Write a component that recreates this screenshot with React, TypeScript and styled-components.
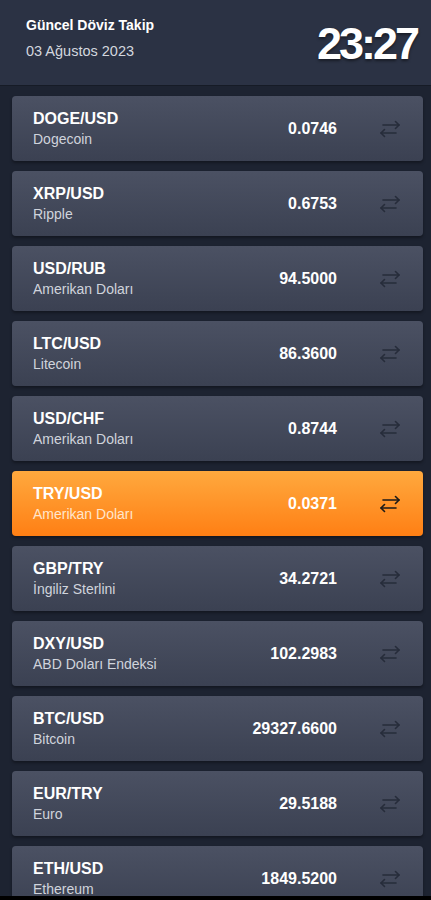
import styled, { createGlobalStyle } from 'styled-components';

interface Rate {
  pair: string;
  name: string;
  price: string;
  active?: boolean;
}

const rates: Rate[] = [
  { pair: 'DOGE/USD', name: 'Dogecoin', price: '0.0746' },
  { pair: 'XRP/USD', name: 'Ripple', price: '0.6753' },
  { pair: 'USD/RUB', name: 'Amerikan Doları', price: '94.5000' },
  { pair: 'LTC/USD', name: 'Litecoin', price: '86.3600' },
  { pair: 'USD/CHF', name: 'Amerikan Doları', price: '0.8744' },
  { pair: 'TRY/USD', name: 'Amerikan Doları', price: '0.0371', active: true },
  { pair: 'GBP/TRY', name: 'İngiliz Sterlini', price: '34.2721' },
  { pair: 'DXY/USD', name: 'ABD Doları Endeksi', price: '102.2983' },
  { pair: 'BTC/USD', name: 'Bitcoin', price: '29327.6600' },
  { pair: 'EUR/TRY', name: 'Euro', price: '29.5188' },
  { pair: 'ETH/USD', name: 'Ethereum', price: '1849.5200' },
];

const GlobalStyle = createGlobalStyle`
  html, body {
    margin: 0;
    padding: 0;
    background: #1d2331;
    font-family: "Liberation Sans", Arial, sans-serif;
  }
`;

const Screen = styled.div`
  display: flex;
  flex-direction: column;
  height: 900px;
  overflow: hidden;
  background: #1d2331;
`;

const Header = styled.header`
  display: flex;
  align-items: center;
  justify-content: space-between;
  height: 85px;
  padding: 0 14px 0 26px;
  background: #2b3244;
  border-bottom: 1px solid #161b26;
  flex-shrink: 0;
`;

const HeaderText = styled.div`
  display: flex;
  flex-direction: column;
  gap: 10px;
  margin-top: -9px;
`;

const AppTitle = styled.div`
  color: #ffffff;
  font-size: 14px;
  font-weight: 700;
`;

const DateText = styled.div`
  color: #d3d7df;
  font-size: 14.5px;
`;

const Clock = styled.div`
  color: #ffffff;
  font-size: 45px;
  font-weight: 700;
  letter-spacing: -3px;
  margin-top: 2px;
  text-shadow: 0 2px 3px rgba(0, 0, 0, 0.45);
`;

const List = styled.div`
  flex: 1;
  display: flex;
  flex-direction: column;
  gap: 10px;
  padding: 10px 8px 0 12px;
  overflow: hidden;
`;

const Card = styled.div<{ $active?: boolean }>`
  display: flex;
  align-items: center;
  height: 65px;
  flex-shrink: 0;
  padding: 0 23px 0 21px;
  border-radius: 4px;
  background: ${(p) =>
    p.$active
      ? 'linear-gradient(180deg, #ffa93e 0%, #ff7f14 100%)'
      : 'linear-gradient(180deg, #4b5163 0%, #3b4152 100%)'};
  box-shadow: 0 2px 3px rgba(0, 0, 0, 0.35);
`;

const Info = styled.div`
  flex: 1;
  display: flex;
  flex-direction: column;
  gap: 3px;
`;

const Pair = styled.div`
  color: #ffffff;
  font-size: 16px;
  font-weight: 700;
`;

const Name = styled.div<{ $active?: boolean }>`
  color: ${(p) => (p.$active ? '#ffe6cc' : '#d0d4dc')};
  font-size: 14px;
`;

const Price = styled.div`
  color: #ffffff;
  font-size: 16px;
  font-weight: 700;
  margin-right: 41px;
`;

const SwapIcon = styled.svg<{ $active?: boolean }>`
  width: 22px;
  height: 22px;
  color: ${(p) => (p.$active ? '#1c1a18' : '#262c3a')};
  flex-shrink: 0;
`;

const BottomEdge = styled.div`
  height: 4px;
  background: #000000;
  flex-shrink: 0;
`;

function Swap({ active }: { active?: boolean }) {
  return (
    <SwapIcon $active={active} viewBox="0 0 22 22" fill="none" stroke="currentColor" strokeWidth={1.6} strokeLinecap="round" strokeLinejoin="round">
      <path d="M5 7h16" />
      <path d="M17.5 3.5 21 7l-3.5 3.5" />
      <path d="M18 15H3" />
      <path d="M6.5 11.5 3 15l3.5 3.5" />
    </SwapIcon>
  );
}

export default function App() {
  return (
    <>
      <GlobalStyle />
      <Screen>
        <Header>
          <HeaderText>
            <AppTitle>Güncel Döviz Takip</AppTitle>
            <DateText>03 Ağustos 2023</DateText>
          </HeaderText>
          <Clock>23:27</Clock>
        </Header>
        <List>
          {rates.map((r) => (
            <Card key={r.pair} $active={r.active}>
              <Info>
                <Pair>{r.pair}</Pair>
                <Name $active={r.active}>{r.name}</Name>
              </Info>
              <Price>{r.price}</Price>
              <Swap active={r.active} />
            </Card>
          ))}
        </List>
        <BottomEdge />
      </Screen>
    </>
  );
}
